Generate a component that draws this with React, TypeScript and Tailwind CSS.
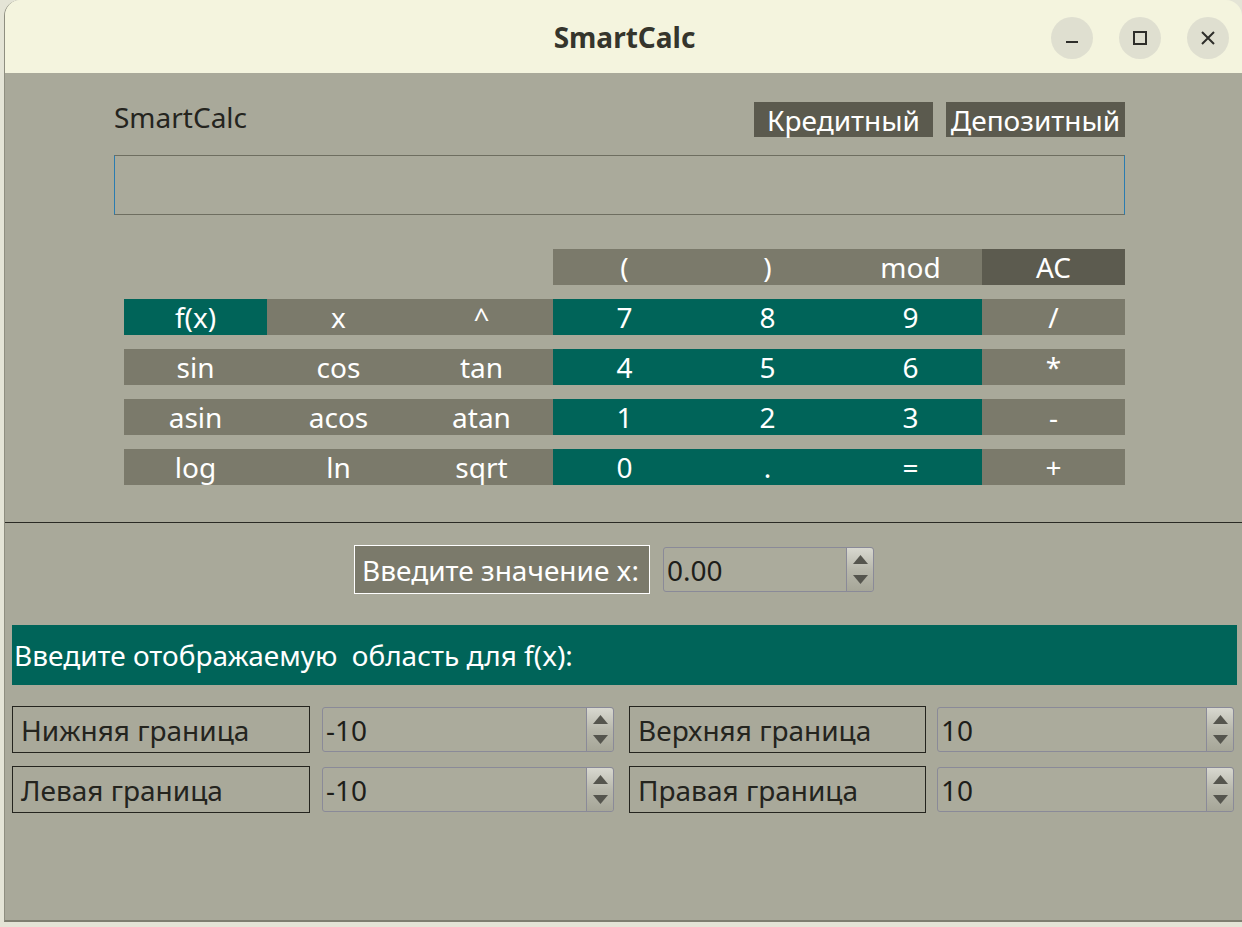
import React from 'react'

const FONT = { fontFamily: '"Noto Sans", "Open Sans", sans-serif' }

function Spin({ value, w }: { value: string; w: string }) {
  return (
    <div className={`${w} h-[45px] flex border border-[#8a8a98] rounded-[3px] bg-[#abab9c]`}>
      <div className="flex-1 flex items-center pl-[3px] text-[28px] text-[#1e1e1a]">{value}</div>
      <div className="w-[27px] flex flex-col border-l border-[#8a8a98] bg-gradient-to-b from-[#d8d8d0] via-[#b8b8ac] to-[#a6a698] rounded-r-[3px]">
        <div className="flex-1 flex items-center justify-center pt-[2px]">
          <svg width="15" height="9" viewBox="0 0 15 9"><path d="M7.5 0 L15 9 L0 9 Z" fill="#55554e" /></svg>
        </div>
        <div className="flex-1 flex items-center justify-center pb-[2px]">
          <svg width="15" height="9" viewBox="0 0 15 9"><path d="M0 0 L15 0 L7.5 9 Z" fill="#55554e" /></svg>
        </div>
      </div>
    </div>
  )
}

export default function App() {
  const teal = 'bg-[#006459]'
  const grey = 'bg-[#7b7a6b]'
  const rows: { t: string; c: string }[][] = [
    [
      { t: 'f(x)', c: teal }, { t: 'x', c: grey }, { t: '^', c: grey },
      { t: '7', c: teal }, { t: '8', c: teal }, { t: '9', c: teal }, { t: '/', c: grey },
    ],
    [
      { t: 'sin', c: grey }, { t: 'cos', c: grey }, { t: 'tan', c: grey },
      { t: '4', c: teal }, { t: '5', c: teal }, { t: '6', c: teal }, { t: '*', c: grey },
    ],
    [
      { t: 'asin', c: grey }, { t: 'acos', c: grey }, { t: 'atan', c: grey },
      { t: '1', c: teal }, { t: '2', c: teal }, { t: '3', c: teal }, { t: '-', c: grey },
    ],
    [
      { t: 'log', c: grey }, { t: 'ln', c: grey }, { t: 'sqrt', c: grey },
      { t: '0', c: teal }, { t: '.', c: teal }, { t: '=', c: teal }, { t: '+', c: grey },
    ],
  ]

  return (
    <div className="w-[1242px] h-[927px] bg-[#e4e4d6] overflow-hidden" style={FONT}>
      <div className="ml-[4px] w-[1238px] h-[922px] flex flex-col rounded-t-[16px] overflow-hidden border-l border-[#8e8e80] border-b-[2px] border-b-[#7e7e70]">
        {/* title bar */}
        <div className="h-[73px] shrink-0 bg-[#f4f4de] flex items-center relative">
          <div className="flex-1 text-center text-[28px] font-bold text-[#35352c] pl-[2px]">SmartCalc</div>
          <div className="absolute right-[13px] top-[17px] flex gap-[26px]">
            <div className="w-[42px] h-[42px] rounded-full bg-[#dfdfd0] flex items-center justify-center">
              <svg width="16" height="16" viewBox="0 0 16 16"><path d="M2 12 H14" stroke="#2e2e2a" strokeWidth="2" /></svg>
            </div>
            <div className="w-[42px] h-[42px] rounded-full bg-[#dfdfd0] flex items-center justify-center">
              <svg width="16" height="16" viewBox="0 0 16 16"><rect x="2" y="2" width="12" height="12" fill="none" stroke="#2e2e2a" strokeWidth="2" /></svg>
            </div>
            <div className="w-[42px] h-[42px] rounded-full bg-[#dfdfd0] flex items-center justify-center">
              <svg width="16" height="16" viewBox="0 0 16 16"><path d="M2 2 L14 14 M14 2 L2 14" stroke="#2e2e2a" strokeWidth="2" /></svg>
            </div>
          </div>
        </div>

        {/* body */}
        <div className="flex-1 bg-[#a9a99a] flex flex-col">
          <div className="pl-[109px] pr-[117px] pt-[29px]">
            <div className="flex items-center justify-between h-[35px]">
              <span className="text-[28px] text-[#24241e] -mt-[6px]">SmartCalc</span>
              <div className="flex gap-[13px]">
                <div className="w-[179px] h-[35px] bg-[#5b5a4e] text-white text-[28px] flex items-center justify-center">Кредитный</div>
                <div className="w-[179px] h-[35px] bg-[#5b5a4e] text-white text-[28px] flex items-center justify-center">Депозитный</div>
              </div>
            </div>
            <div className="mt-[18px] h-[60px] border border-[#6e6e60] border-l-[#2a7cb0] border-r-[#2a7cb0] bg-[#aaaa9b]" />

            <div className="mt-[34px] pl-[10px] flex flex-col gap-[14px]">
              <div className="flex h-[36px] pl-[429px]">
                {['(', ')', 'mod'].map((t) => (
                  <div key={t} className={`w-[143px] ${grey} text-white text-[28px] flex items-center justify-center`}>{t}</div>
                ))}
                <div className="w-[143px] bg-[#5c5b4f] text-white text-[28px] flex items-center justify-center">AC</div>
              </div>
              {rows.map((r, i) => (
                <div key={i} className="flex h-[36px]">
                  {r.map((b) => (
                    <div key={b.t} className={`w-[143px] ${b.c} text-white text-[28px] flex items-center justify-center`}>{b.t}</div>
                  ))}
                </div>
              ))}
            </div>
          </div>

          <div className="mt-[37px] h-px bg-[#2a2a24]" />

          <div className="mt-[22px] flex items-center pl-[349px] gap-[13px]">
            <div className="w-[296px] h-[49px] border border-white bg-[#7b7a6b] text-white text-[28px] flex items-center pl-[7px]">Введите значение x:</div>
            <Spin value="0.00" w="w-[211px]" />
          </div>

          <div className={`mt-[31px] ml-[7px] w-[1225px] h-[60px] ${teal} text-white text-[28px] flex items-center pl-[2px] whitespace-pre`}>Введите отображаемую  область для f(x):</div>

          <div className="mt-[21px] pl-[7px] flex flex-col gap-[13px]">
            {[
              ['Нижняя граница', '-10', 'Верхняя граница', '10'],
              ['Левая граница', '-10', 'Правая граница', '10'],
            ].map((r) => (
              <div key={r[0]} className="flex items-center h-[47px]">
                <div className="w-[298px] h-[47px] border border-[#24241e] text-[28px] text-[#24241e] flex items-center pl-[8px]">{r[0]}</div>
                <div className="ml-[12px]"><Spin value={r[1]} w="w-[292px]" /></div>
                <div className="ml-[15px] w-[297px] h-[47px] border border-[#24241e] text-[28px] text-[#24241e] flex items-center pl-[8px]">{r[2]}</div>
                <div className="ml-[11px]"><Spin value={r[3]} w="w-[297px]" /></div>
              </div>
            ))}
          </div>
        </div>
      </div>
    </div>
  )
}
